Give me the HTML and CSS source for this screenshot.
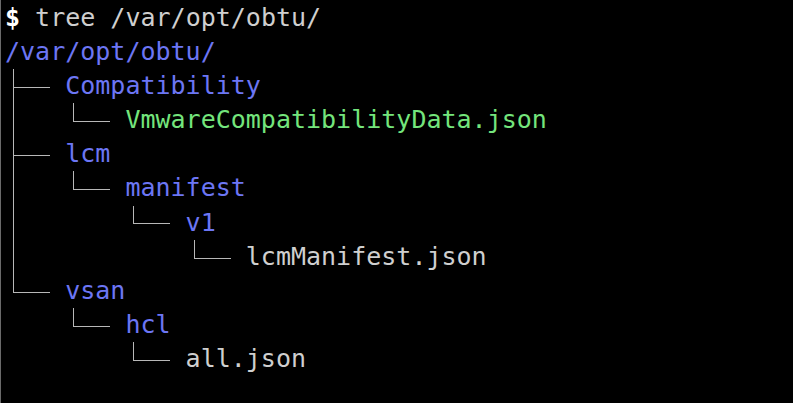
FILE: index.html
```html
<!DOCTYPE html>
<html>
<head>
<meta charset="utf-8">
<link rel="stylesheet" href="styles.css">
</head>
<body>
<div class="term">
  <div class="row"><span class="prompt">$</span><span class="cmd"> tree /var/opt/obtu/</span></div>
  <div class="row"><span class="dir">/var/opt/obtu/</span></div>
  <div class="row"><span class="g tee"></span><span class="dir">Compatibility</span></div>
  <div class="row"><span class="g pipe"></span><span class="g ell"></span><span class="exe">VmwareCompatibilityData.json</span></div>
  <div class="row"><span class="g tee"></span><span class="dir">lcm</span></div>
  <div class="row"><span class="g pipe"></span><span class="g ell"></span><span class="dir">manifest</span></div>
  <div class="row"><span class="g pipe"></span><span class="g"></span><span class="g ell"></span><span class="dir">v1</span></div>
  <div class="row"><span class="g pipe"></span><span class="g"></span><span class="g"></span><span class="g ell"></span><span class="file">lcmManifest.json</span></div>
  <div class="row"><span class="g ell"></span><span class="dir">vsan</span></div>
  <div class="row"><span class="g"></span><span class="g ell"></span><span class="dir">hcl</span></div>
  <div class="row"><span class="g"></span><span class="g"></span><span class="g ell"></span><span class="file">all.json</span></div>
</div>
</body>
</html>
```

FILE: styles.css
```css
html, body {
  margin: 0;
  padding: 0;
  background: #000;
}
body {
  width: 793px;
  height: 403px;
  overflow: hidden;
  box-sizing: border-box;
  border-left: 1px solid #6a6a6a;
}
.term {
  font-family: "DejaVu Sans Mono", "Liberation Mono", monospace;
  font-size: 25px;
  color: #cfcfcf;
  padding: 1px 0 0 4px;
}
.row {
  display: flex;
  height: 34.1px;
  line-height: 34.1px;
  white-space: pre;
}
.prompt {
  color: #fff;
  font-weight: bold;
}
.cmd { color: #cfcfcf; }
.dir { color: #6c76f4; }
.exe { color: #74e57c; }
.file { color: #cfcfcf; }
.g {
  width: 4ch;
  flex: none;
}
.pipe {
  background: linear-gradient(#b8b8b8, #b8b8b8) no-repeat 8px 0 / 1px 100%;
}
.tee {
  background:
    linear-gradient(#b8b8b8, #b8b8b8) no-repeat 8px 0 / 1px 100%,
    linear-gradient(#b8b8b8, #b8b8b8) no-repeat 8px 54% / calc(3ch - 8px) 1px;
}
.ell {
  background:
    linear-gradient(#b8b8b8, #b8b8b8) no-repeat 8px 0 / 1px 54%,
    linear-gradient(#b8b8b8, #b8b8b8) no-repeat 8px 54% / calc(3ch - 8px) 1px;
}
```
